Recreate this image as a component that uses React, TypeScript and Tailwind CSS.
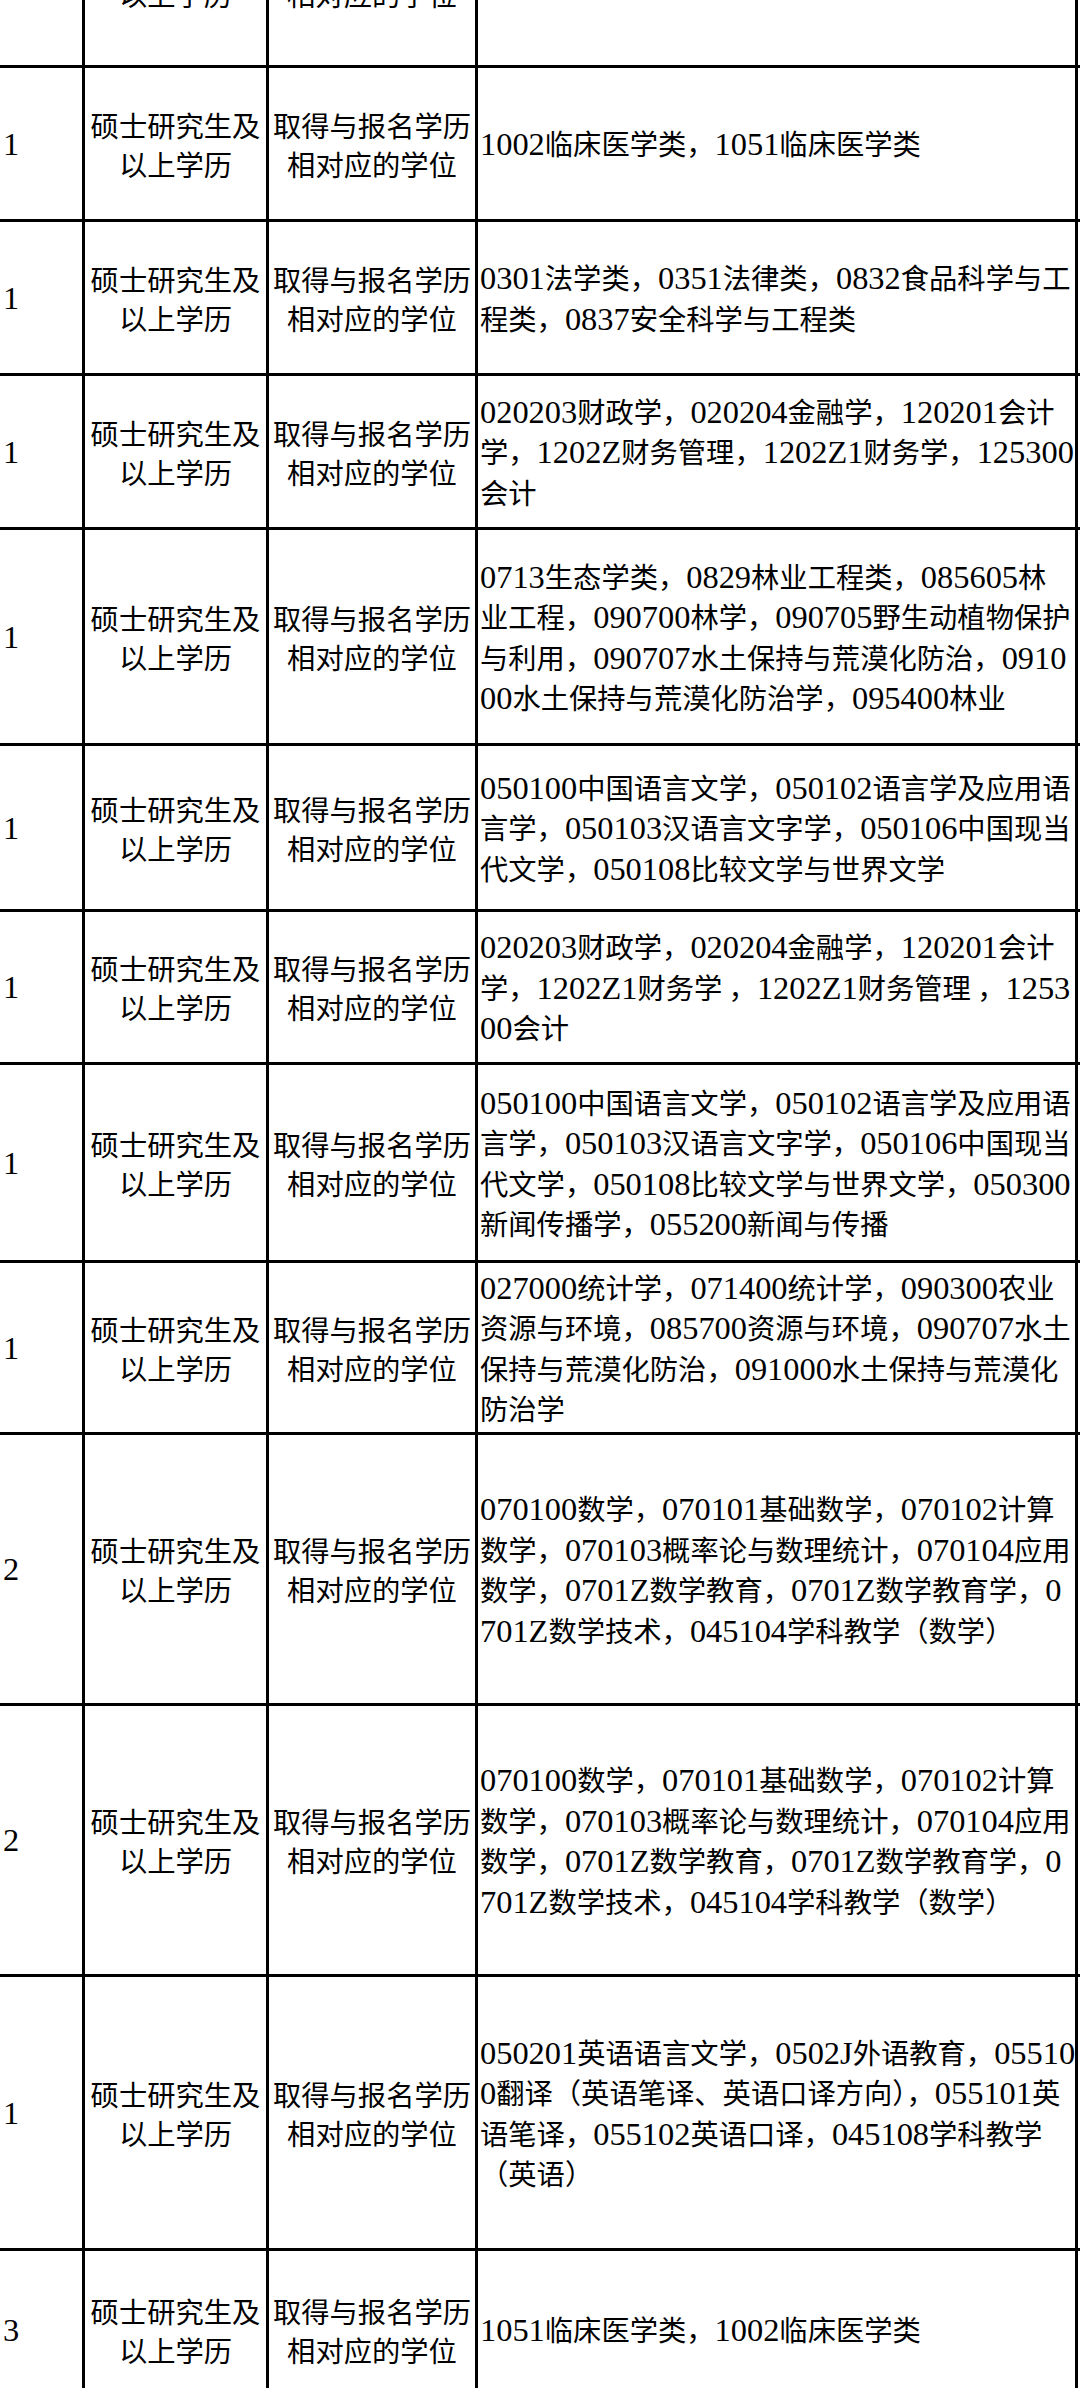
type Row = {
  h: string;
  n: string;
  lines: string[];
};

const rows: Row[] = [
  { h: "h-[185px]", n: "", lines: [] },
  { h: "h-[154px]", n: "1", lines: ["1002临床医学类，1051临床医学类"] },
  {
    h: "h-[154px]",
    n: "1",
    lines: ["0301法学类，0351法律类，0832食品科学与工", "程类，0837安全科学与工程类"],
  },
  {
    h: "h-[154px]",
    n: "1",
    lines: [
      "020203财政学，020204金融学，120201会计",
      "学，1202Z财务管理，1202Z1财务学，125300",
      "会计",
    ],
  },
  {
    h: "h-[216px]",
    n: "1",
    lines: [
      "0713生态学类，0829林业工程类，085605林",
      "业工程，090700林学，090705野生动植物保护",
      "与利用，090707水土保持与荒漠化防治，0910",
      "00水土保持与荒漠化防治学，095400林业",
    ],
  },
  {
    h: "h-[166px]",
    n: "1",
    lines: [
      "050100中国语言文学，050102语言学及应用语",
      "言学，050103汉语言文字学，050106中国现当",
      "代文学，050108比较文学与世界文学",
    ],
  },
  {
    h: "h-[153px]",
    n: "1",
    lines: [
      "020203财政学，020204金融学，120201会计",
      "学，1202Z1财务学 ，1202Z1财务管理 ，1253",
      "00会计",
    ],
  },
  {
    h: "h-[198px]",
    n: "1",
    lines: [
      "050100中国语言文学，050102语言学及应用语",
      "言学，050103汉语言文字学，050106中国现当",
      "代文学，050108比较文学与世界文学，050300",
      "新闻传播学，055200新闻与传播",
    ],
  },
  {
    h: "h-[172px]",
    n: "1",
    lines: [
      "027000统计学，071400统计学，090300农业",
      "资源与环境，085700资源与环境，090707水土",
      "保持与荒漠化防治，091000水土保持与荒漠化",
      "防治学",
    ],
  },
  {
    h: "h-[271px]",
    n: "2",
    lines: [
      "070100数学，070101基础数学，070102计算",
      "数学，070103概率论与数理统计，070104应用",
      "数学，0701Z数学教育，0701Z数学教育学，0",
      "701Z数学技术，045104学科教学（数学）",
    ],
  },
  {
    h: "h-[271px]",
    n: "2",
    lines: [
      "070100数学，070101基础数学，070102计算",
      "数学，070103概率论与数理统计，070104应用",
      "数学，0701Z数学教育，0701Z数学教育学，0",
      "701Z数学技术，045104学科教学（数学）",
    ],
  },
  {
    h: "h-[274px]",
    n: "1",
    lines: [
      "050201英语语言文学，0502J外语教育，05510",
      "0翻译（英语笔译、英语口译方向），055101英",
      "语笔译，055102英语口译，045108学科教学",
      "（英语）",
    ],
  },
  { h: "h-[160px]", n: "3", lines: ["1051临床医学类，1002临床医学类"] },
];

// digits and latin letters are set in a serif face, a bit larger than the CJK text
const Mixed = ({ text }: { text: string }) => {
  const parts = text.split(/([0-9A-Za-z]+)/);
  return (
    <>
      {parts.map((p, i) =>
        i % 2 === 1 ? (
          <span key={i} className="font-['Liberation_Serif',serif] text-[32.4px]">
            {p}
          </span>
        ) : (
          <span key={i}>{p}</span>
        )
      )}
    </>
  );
};

const TableRow = ({ row }: { row: Row }) => (
  <div className={`flex ${row.h} border-b-[3px] border-black`}>
    <div className="w-[85px] shrink-0 border-r-[3px] border-black flex items-center pl-[3px] leading-[40px]">
      <Mixed text={row.n} />
    </div>

    <div className="w-[184px] shrink-0 border-r-[3px] border-black flex flex-col items-center justify-center text-center">
      <div className="h-[39px] leading-[39px] whitespace-nowrap">硕士研究生及</div>
      <div className="h-[39px] leading-[39px] whitespace-nowrap">以上学历</div>
    </div>

    <div className="w-[209px] shrink-0 border-r-[3px] border-black flex flex-col items-center justify-center text-center">
      <div className="h-[39px] leading-[39px] whitespace-nowrap">取得与报名学历</div>
      <div className="h-[39px] leading-[39px] whitespace-nowrap">相对应的学位</div>
    </div>

    <div className="w-[600px] shrink-0 border-r-[3px] border-black flex flex-col justify-center pl-[2px]">
      {row.lines.map((line, i) => (
        <div key={i} className="h-[40.5px] leading-[40.5px] whitespace-nowrap">
          <Mixed text={line} />
        </div>
      ))}
    </div>
  </div>
);

export default function App() {
  return (
    <div className="w-[1080px] h-[2388px] overflow-hidden bg-white text-black font-['Noto_Sans_CJK_SC',sans-serif] text-[28.3px]">
      <div className="mt-[-117px]">
        {rows.map((row, i) => (
          <TableRow key={i} row={row} />
        ))}
      </div>
    </div>
  );
}
